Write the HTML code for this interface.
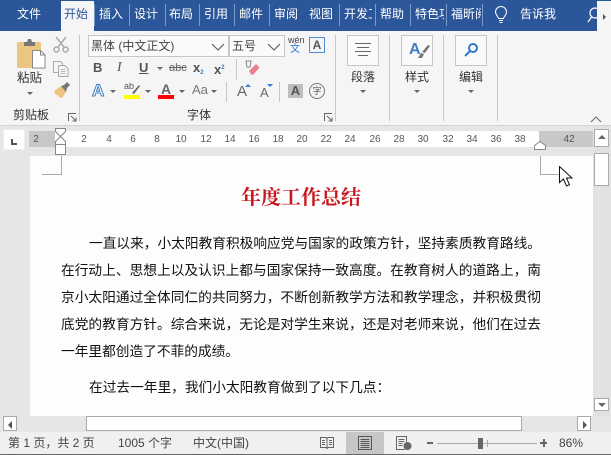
<!DOCTYPE html>
<html><head><meta charset="utf-8">
<style>
html,body{margin:0;padding:0}
body{width:611px;height:455px;overflow:hidden;position:relative;background:#e6e6e6;font-family:"Liberation Sans","Noto Sans CJK SC",sans-serif;color:#444}
.a{position:absolute}
.t{position:absolute;white-space:nowrap;line-height:16px}
.tab{position:absolute;top:6px;height:16px;line-height:16px;font-size:12px;color:#fff;white-space:nowrap;overflow:hidden}
.sp{position:absolute;top:4px;width:1px;height:22px;background:#7c9bc8}
.vs{position:absolute;width:1px;background:#c6c6c6}
.rn{position:absolute;top:133px;width:20px;margin-left:-10px;text-align:center;font-size:10px;line-height:13px;color:#555}
.tri{position:absolute;width:0;height:0;border-left:3px solid transparent;border-right:3px solid transparent;border-top:3px solid #666}
.l{position:absolute;white-space:nowrap;font-family:"WenQuanYi Zen Hei","Noto Sans CJK SC",sans-serif;font-size:13.700px;line-height:16px;color:#111;left:61px;width:480px;text-align:justify;text-align-last:justify}
.big{position:absolute;width:30px;height:29px;border:1px solid #c6c6c6;background:#fafafa}
.lb{position:absolute;font-size:12px;line-height:16px;color:#333;white-space:nowrap}
</style></head>
<body>
<!-- title bar -->
<div class="a" style="left:0;top:0;width:611px;height:31px;background:#2b579a"></div>
<div class="a" style="left:61px;top:1px;width:33px;height:30px;background:#f5f5f5"></div>
<div class="tab" style="left:17px">文件</div>
<div class="tab" style="left:64px;color:#2b579a">开始</div>
<div class="tab" style="left:99px">插入</div>
<div class="tab" style="left:134px">设计</div>
<div class="tab" style="left:169px">布局</div>
<div class="tab" style="left:204px">引用</div>
<div class="tab" style="left:239px">邮件</div>
<div class="tab" style="left:274px">审阅</div>
<div class="tab" style="left:309px">视图</div>
<div class="tab" style="left:344px;width:28px">开发工具</div>
<div class="tab" style="left:380px">帮助</div>
<div class="tab" style="left:415px;width:29px">特色功能</div>
<div class="tab" style="left:451px;width:30px">福昕阅读</div>
<div class="sp" style="left:94px"></div><div class="sp" style="left:129px"></div><div class="sp" style="left:165px"></div><div class="sp" style="left:199px"></div><div class="sp" style="left:234px"></div><div class="sp" style="left:269px"></div><div class="sp" style="left:339px"></div><div class="sp" style="left:375px"></div><div class="sp" style="left:410px"></div><div class="sp" style="left:446px"></div><div class="sp" style="left:482px"></div>
<svg class="a" style="left:493px;top:6px" width="16" height="18" viewBox="0 0 16 18" fill="none" stroke="#fff" stroke-width="1"><path d="M5.500 12.500C5 10 2.500 9 2.500 6A5.500 5.500 0 0 1 13.500 6C13.500 9 11 10 10.500 12.500Z"/><path d="M6 14.500h4M6.500 16.500h3"/></svg>
<div class="tab" style="left:520px">告诉我</div>
<svg class="a" style="left:587px;top:6px" width="12" height="19" viewBox="0 0 12 19" fill="none" stroke="#fff" stroke-width="1.200"><circle cx="8" cy="7" r="5"/><path d="M4.500 11 1 16"/></svg>
<div class="a" style="left:597px;top:1px;width:14px;height:30px;background:#f5f5f5"></div>
<div class="a" style="left:603px;top:14px;width:0;height:0;border-top:3px solid transparent;border-bottom:3px solid transparent;border-left:3px solid #555"></div>

<!-- ribbon -->
<div class="a" style="left:0;top:31px;width:611px;height:94px;background:#f5f5f5"></div>
<div class="a" style="left:0;top:125px;width:611px;height:1px;background:#d4d4d4"></div>
<div class="vs" style="left:79px;top:35px;height:86px"></div><div class="vs" style="left:335px;top:35px;height:86px"></div><div class="vs" style="left:389px;top:35px;height:86px"></div><div class="vs" style="left:443px;top:35px;height:86px"></div><div class="vs" style="left:497px;top:35px;height:86px"></div>

<!-- clipboard -->
<svg class="a" style="left:16px;top:38px" width="30" height="32" viewBox="0 0 30 32"><rect x="1" y="4" width="24" height="26" rx="1.500" fill="#ecc580"/><path d="M8 4h3l1-3h3l1 3h3v4H8z" fill="#777"/><path d="M16.500 12.500h8l4.500 4.500v13h-12.500z" fill="#fff" stroke="#888"/><path d="M24.500 12.500v4.500h4.500" fill="none" stroke="#888"/></svg>
<div class="lb" style="left:17px;top:70px;font-size:12.500px">粘贴</div>
<div class="tri" style="left:27px;top:92px"></div>
<svg class="a" style="left:53px;top:36px" width="16" height="17" viewBox="0 0 16 17" fill="none" stroke="#aaa" stroke-width="1.500"><path d="M3 1l8 10M13 1L5 11"/><circle cx="3.500" cy="13.500" r="2.500"/><circle cx="12.500" cy="13.500" r="2.500"/></svg>
<svg class="a" style="left:53px;top:61px" width="16" height="16" viewBox="0 0 16 16" fill="#f5f5f5" stroke="#aaa"><path d="M.5.500h7l2 2v9h-9z"/><path d="M5.500 4.500h6l3.500 3v8h-9.500z"/><path d="M7.500 8.500h5M7.500 10.500h5M7.500 12.500h5" stroke-width=".8"/></svg>
<svg class="a" style="left:53px;top:82px" width="17" height="17" viewBox="0 0 17 17"><path d="M1 9l7-5 5 6-4 6-3-1-1-2-2 0z" fill="#ecc580"/><path d="M8 4l3-1 3-3 3 3-3 3-1 4z" fill="#777"/></svg>
<div class="lb" style="left:13px;top:107px;font-size:12px">剪贴板</div>
<svg class="a" style="left:68px;top:113px" width="9" height="9" viewBox="0 0 9 9" fill="none" stroke="#666"><path d="M.5 8V.500H8M3 3l4.500 4.500M4.500 8h3.500V4.500"/></svg>
<svg class="a" style="left:324px;top:113px" width="9" height="9" viewBox="0 0 9 9" fill="none" stroke="#666"><path d="M.5 8V.500H8M3 3l4.500 4.500M4.500 8h3.500V4.500"/></svg>

<!-- font combos -->
<div class="a" style="left:88px;top:35px;width:139px;height:20px;border:1px solid #c6c6c6;background:#fafafa"></div>
<div class="a" style="left:229px;top:35px;width:54px;height:20px;border:1px solid #c6c6c6;background:#fafafa"></div>
<div class="t" style="left:91px;top:38px;font-size:12px">黑体 (中文正文)</div>
<div class="t" style="left:232px;top:38px;font-size:12px">五号</div>
<svg class="a" style="left:211px;top:43px" width="14" height="8" viewBox="0 0 14 8" fill="none" stroke="#555"><path d="M1 1l6 6 6-6"/></svg>
<svg class="a" style="left:267px;top:43px" width="14" height="8" viewBox="0 0 14 8" fill="none" stroke="#555"><path d="M1 1l6 6 6-6"/></svg>
<div class="t" style="left:288px;top:35px;font-size:9px;line-height:10px">wén</div>
<div class="t" style="left:290px;top:45px;font-size:10px;line-height:10px;color:#2b7cd3">文</div>
<div class="a" style="left:309px;top:37px;width:14px;height:14px;border:1px solid #4a8fd6;text-align:center;font:bold 12px/14px 'Liberation Sans';color:#555">A</div>

<div class="t" style="left:93px;top:60px;font:bold 13px/16px 'Liberation Sans';color:#555">B</div>
<div class="t" style="left:117px;top:60px;font:italic 14px/16px 'Liberation Serif';color:#555">I</div>
<div class="t" style="left:139px;top:60px;font:bold 13px/16px 'Liberation Sans';color:#555;text-decoration:underline">U</div>
<div class="tri" style="left:157px;top:67px"></div>
<div class="t" style="left:169px;top:60px;font-size:11px;color:#666;text-decoration:line-through">abc</div>
<div class="t" style="left:193px;top:60px;font:bold 13px/16px 'Liberation Sans';color:#555">x<sub style="font-size:6px;color:#2b7cd3;vertical-align:-2px">2</sub></div>
<div class="t" style="left:214px;top:60px;font:bold 13px/16px 'Liberation Sans';color:#555">x<sup style="font-size:6px;color:#2b7cd3;vertical-align:5px">2</sup></div>
<div class="vs" style="left:236px;top:59px;height:21px"></div>
<svg class="a" style="left:245px;top:60px" width="15" height="16" viewBox="0 0 15 16"><path d="M1 1h5l-1 6H2z" fill="none" stroke="#888"/><path d="M4 11l7-7 3.500 3.500-6 7H6z" fill="#ee7d8f"/></svg>

<div class="t" style="left:92px;top:81px;font:bold 17px/20px 'Liberation Sans';color:#fff;-webkit-text-stroke:1px #3f7fc4">A</div>
<div class="tri" style="left:110px;top:90px"></div>
<svg class="a" style="left:124px;top:82px" width="17" height="17" viewBox="0 0 17 17"><path d="M8 11l7-8 1 1-6 8z" fill="#666"/><rect y="13" width="16" height="4" fill="#ff0"/></svg>
<div class="t" style="left:124px;top:81px;font-size:9px;line-height:10px;color:#555">ab</div>
<div class="tri" style="left:145px;top:90px"></div>
<div class="t" style="left:161px;top:82px;font:bold 14px/14px 'Liberation Sans';color:#666">A</div>
<div class="a" style="left:158px;top:95px;width:16px;height:4px;background:#f00"></div>
<div class="tri" style="left:179px;top:90px"></div>
<div class="t" style="left:192px;top:83px;font-size:13px;line-height:14px;color:#777">Aa</div>
<div class="tri" style="left:211px;top:90px"></div>
<div class="vs" style="left:226px;top:82px;height:20px"></div>
<div class="t" style="left:237px;top:85px;font-size:15px;line-height:14px;color:#666">A</div>
<div class="a" style="left:245px;top:84px;width:0;height:0;border-left:3px solid transparent;border-right:3px solid transparent;border-bottom:3px solid #2b7cd3"></div>
<div class="t" style="left:260px;top:87px;font-size:13px;line-height:12px;color:#666">A</div>
<div class="a" style="left:267px;top:84px;width:0;height:0;border-left:3px solid transparent;border-right:3px solid transparent;border-top:3px solid #2b7cd3"></div>
<div class="vs" style="left:279px;top:82px;height:20px"></div>
<div class="a" style="left:288px;top:84px;width:15px;height:14px;background:#bdbdbd;text-align:center;font:bold 13px/14px 'Liberation Sans';color:#555">A</div>
<div class="a" style="left:309px;top:83px;width:14px;height:14px;border:1px solid #777;border-radius:8px;text-align:center;font-size:9px;line-height:14px;color:#555">字</div>
<div class="lb" style="left:187px;top:107px;font-size:12px">字体</div>

<!-- large buttons -->
<div class="big" style="left:347px;top:35px"></div>
<svg class="a" style="left:355px;top:43px" width="16" height="13" viewBox="0 0 16 13" stroke="#666"><path d="M0 .5h16M2 4.500h12M0 8.500h16M3 12.500h10"/></svg>
<div class="lb" style="left:351px;top:69px">段落</div><div class="tri" style="left:360px;top:90px"></div>
<div class="big" style="left:401px;top:35px"></div>
<div class="t" style="left:409px;top:41px;font:bold 16px/18px 'Liberation Sans';color:#3f7fc4">A</div>
<svg class="a" style="left:418px;top:45px" width="12" height="14" viewBox="0 0 12 14"><path d="M10 0l2 1-5 7-3-1zM3 8l3 1-2 4H0z" fill="#777"/></svg>
<div class="lb" style="left:405px;top:69px">样式</div><div class="tri" style="left:414px;top:90px"></div>
<div class="big" style="left:455px;top:35px"></div>
<svg class="a" style="left:463px;top:42px" width="16" height="16" viewBox="0 0 16 16" fill="none" stroke="#2f7ac8" stroke-width="2"><circle cx="10" cy="6" r="4"/><path d="M7 9l-5 5"/></svg>
<div class="lb" style="left:459px;top:69px">编辑</div><div class="tri" style="left:468px;top:90px"></div>
<svg class="a" style="left:590px;top:116px" width="12" height="7" viewBox="0 0 12 7" fill="none" stroke="#666"><path d="M1 6l5-5 5 5"/></svg>

<!-- ruler -->
<div class="a" style="left:3px;top:129px;width:22px;height:21px;background:#fff;border:1px solid #eee;box-sizing:border-box"></div>
<div class="a" style="left:11px;top:139px;width:2px;height:6px;background:#555"></div>
<div class="a" style="left:11px;top:143px;width:6px;height:2px;background:#555"></div>
<div class="a" style="left:29px;top:131px;width:564px;height:16px;background:#fff"></div>
<div class="a" style="left:29px;top:131px;width:26px;height:16px;background:#c8c8c8"></div>
<div class="a" style="left:539px;top:131px;width:54px;height:16px;background:#c8c8c8"></div>
<div class="rn" style="left:36px">2</div>
<div class="rn" style="left:84px">2</div><div class="rn" style="left:109px">4</div><div class="rn" style="left:133px">6</div><div class="rn" style="left:157px">8</div><div class="rn" style="left:181px">10</div><div class="rn" style="left:206px">12</div><div class="rn" style="left:230px">14</div><div class="rn" style="left:254px">16</div><div class="rn" style="left:278px">18</div><div class="rn" style="left:302px">20</div><div class="rn" style="left:326px">22</div><div class="rn" style="left:350px">24</div><div class="rn" style="left:375px">26</div><div class="rn" style="left:399px">28</div><div class="rn" style="left:423px">30</div><div class="rn" style="left:448px">32</div><div class="rn" style="left:472px">34</div><div class="rn" style="left:496px">36</div><div class="rn" style="left:520px">38</div><div class="rn" style="left:569px">42</div>
<svg class="a" style="left:55px;top:128px" width="11" height="28" viewBox="0 0 11 28" fill="#fff" stroke="#888"><path d="M.5.500h10v3L5.500 8.500.5 3.500z"/><path d="M5.500 8.500l5 5v3H.5v-3z" fill="#fff"/><path d="M.5 16.500h10v10H.5z"/></svg>
<svg class="a" style="left:534px;top:141px" width="12" height="9" viewBox="0 0 12 9" fill="#fff" stroke="#888"><path d="M.5 8.500v-4l5.500-4 5.500 4v4z"/></svg>

<!-- page -->
<div class="a" style="left:30px;top:156px;width:563px;height:260px;background:#fdfdfd"></div>
<div class="a" style="left:61px;top:156px;width:1px;height:19px;background:#aaa"></div>
<div class="a" style="left:42px;top:174px;width:20px;height:1px;background:#aaa"></div>
<div class="a" style="left:540px;top:156px;width:1px;height:19px;background:#aaa"></div>
<div class="a" style="left:540px;top:174px;width:19px;height:1px;background:#aaa"></div>
<div class="a" style="left:120px;width:362px;top:187px;text-align:center;font:bold 20px/22px 'Liberation Serif','Noto Serif CJK SC',serif;color:#c8161d;white-space:nowrap">年度工作总结</div>
<div class="l" style="top:234px;left:89px;width:452px">一直以来，小太阳教育积极响应党与国家的政策方针，坚持素质教育路线。</div>
<div class="l" style="top:261px">在行动上、思想上以及认识上都与国家保持一致高度。在教育树人的道路上，南</div>
<div class="l" style="top:288px">京小太阳通过全体同仁的共同努力，不断创新教学方法和教学理念，并积极贯彻</div>
<div class="l" style="top:315px">底党的教育方针。综合来说，无论是对学生来说，还是对老师来说，他们在过去</div>
<div class="l" style="top:342px;width:auto;text-align-last:left">一年里都创造了不菲的成绩。</div>
<div class="l" style="top:378px;left:89px;width:auto;text-align-last:left">在过去一年里，我们小太阳教育做到了以下几点：</div>
<svg class="a" style="left:559px;top:166px" width="14" height="22" viewBox="0 0 14 22"><path d="M.5.500v16l4-3.500 3 7 3-1.300-3-6.700h5.500z" fill="#fff" stroke="#111"/></svg>

<!-- vertical scrollbar -->
<div class="a" style="left:593px;top:126px;width:18px;height:306px;background:#e2e2e2"></div>
<div class="a" style="left:594px;top:129px;width:15px;height:18px;background:#fff;border:1px solid #aaa;box-sizing:border-box"></div>
<div class="a" style="left:598px;top:135px;width:0;height:0;border-left:4px solid transparent;border-right:4px solid transparent;border-bottom:4px solid #666"></div>
<div class="a" style="left:594px;top:153px;width:15px;height:33px;background:#fff;border:1px solid #aaa;box-sizing:border-box"></div>
<div class="a" style="left:594px;top:398px;width:15px;height:13px;background:#fff;border:1px solid #aaa;box-sizing:border-box"></div>
<div class="a" style="left:598px;top:403px;width:0;height:0;border-left:4px solid transparent;border-right:4px solid transparent;border-top:4px solid #666"></div>

<!-- horizontal scrollbar -->
<div class="a" style="left:0;top:416px;width:611px;height:16px;background:#e6e6e6"></div>
<div class="a" style="left:3px;top:416px;width:14px;height:15px;background:#fff;border:1px solid #aaa;box-sizing:border-box"></div>
<div class="a" style="left:8px;top:421px;width:0;height:0;border-top:4px solid transparent;border-bottom:4px solid transparent;border-right:4px solid #555"></div>
<div class="a" style="left:86px;top:416px;width:436px;height:15px;background:#fff;border:1px solid #aaa;box-sizing:border-box"></div>
<div class="a" style="left:577px;top:416px;width:14px;height:15px;background:#fff;border:1px solid #aaa;box-sizing:border-box"></div>
<div class="a" style="left:583px;top:421px;width:0;height:0;border-top:4px solid transparent;border-bottom:4px solid transparent;border-left:4px solid #555"></div>

<!-- status bar -->
<div class="a" style="left:0;top:432px;width:611px;height:22px;background:#f0f0f0"></div>
<div class="a" style="left:0;top:454px;width:611px;height:1px;background:#666"></div>
<div class="t" style="left:8px;top:435px;font-size:12px">第 1 页，共 2 页</div>
<div class="t" style="left:118px;top:435px;font-size:12px">1005 个字</div>
<div class="t" style="left:193px;top:435px;font-size:12px">中文(中国)</div>
<svg class="a" style="left:320px;top:436px" width="14" height="14" viewBox="0 0 14 14" fill="none" stroke="#666"><path d="M.5 1.500h5.500l1 1 1-1h5.500v10h-5.500l-1 1-1-1H.5zM7 2.500v10M2 4.500h3M2 6.500h3M2 8.500h3M9 4.500h3M9 6.500h3M9 8.500h3"/></svg>
<div class="a" style="left:346px;top:432px;width:38px;height:22px;background:#c6c6c6"></div>
<svg class="a" style="left:358px;top:436px" width="14" height="14" viewBox="0 0 14 14" fill="none" stroke="#555"><path d="M.5.500h13v13H.5zM2.500 3.500h9M2.500 5.500h9M2.500 7.500h9M2.500 9.500h9M2.500 11.500h9"/></svg>
<svg class="a" style="left:396px;top:436px" width="16" height="14" viewBox="0 0 16 14" fill="none" stroke="#666"><path d="M9 13.500H.5V.500h10v5M2.500 3.500h6M2.500 5.500h6M2.500 7.500h4M2.500 9.500h4"/><circle cx="11.500" cy="10" r="3.500" fill="#666"/></svg>
<div class="a" style="left:427px;top:442px;width:6px;height:2px;background:#666"></div>
<div class="a" style="left:437px;top:443px;width:100px;height:1px;background:#aaa"></div>
<div class="a" style="left:487px;top:440px;width:1px;height:7px;background:#aaa"></div>
<div class="a" style="left:478px;top:438px;width:5px;height:11px;background:#666"></div>
<div class="a" style="left:540px;top:442px;width:7px;height:2px;background:#666"></div>
<div class="a" style="left:543px;top:439px;width:2px;height:8px;background:#666"></div>
<div class="t" style="left:559px;top:435px;font-size:12px">86%</div>
</body></html>
